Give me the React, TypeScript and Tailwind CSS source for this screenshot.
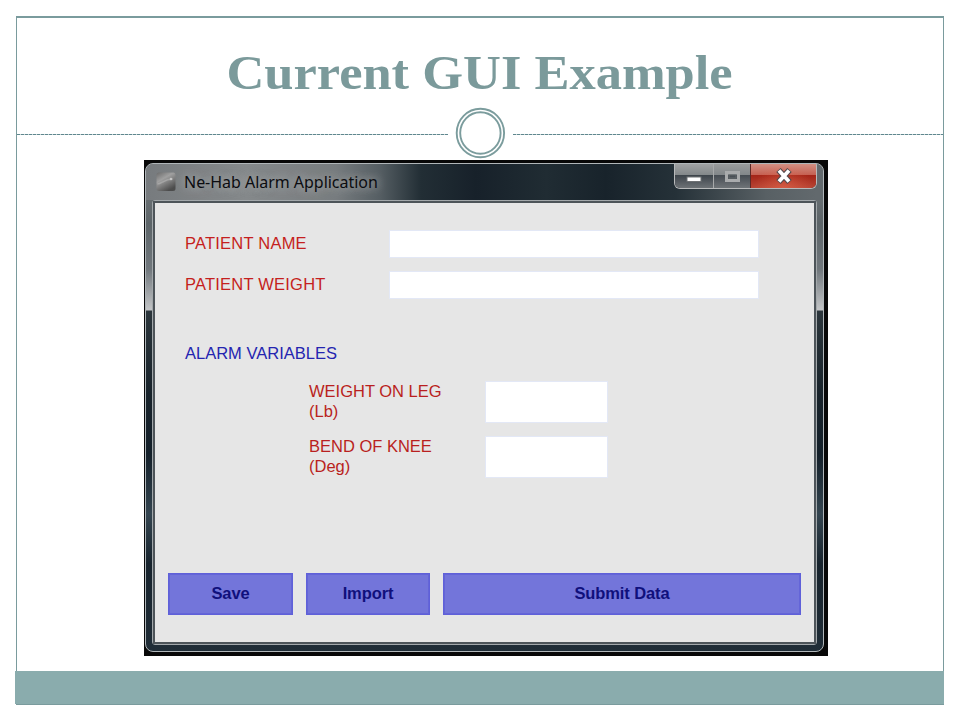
import React from "react";

const labelText = "font-['Liberation_Sans',Arial,sans-serif] text-[16.5px] leading-[19.5px]";

function Divider() {
  return (
    <div className="flex h-px w-full justify-between">
      <div className="h-px w-[431px] bg-[repeating-linear-gradient(90deg,#5f878e_0_3px,#c3d3d5_3px_4px)]" />
      <div className="h-px w-[430px] bg-[repeating-linear-gradient(90deg,#5f878e_0_3px,#c3d3d5_3px_4px)]" />
    </div>
  );
}

function Ring() {
  return (
    <svg className="absolute left-[455px] top-[107px]" width="51" height="52" viewBox="0 0 51 52" fill="none" stroke="#7b9c9d">
      <ellipse cx="25.4" cy="26" rx="23.7" ry="24.2" strokeWidth="1.9" />
      <ellipse cx="25.4" cy="26" rx="20.2" ry="20.8" strokeWidth="1.9" />
    </svg>
  );
}

function Caption() {
  return (
    <div className="flex h-[36px] w-full justify-between bg-[linear-gradient(90deg,#777b7e_0,#85898b_100px,#777c7f_190px,#545d62_235px,#222e35_275px,#17212a_330px,#202c33_400px,#18232b_460px,#253138_530px,#586064_620px,#62696d_670px)]">
      <div className="flex items-center">
        <svg className="ml-[10px]" width="20" height="20" viewBox="0 0 20 20">
          <defs>
            <linearGradient id="appIcon" x1="0" y1="0" x2="0.6" y2="1">
              <stop offset="0" stopColor="#6b6b6b" />
              <stop offset=".4" stopColor="#a0a0a0" />
              <stop offset="1" stopColor="#4c4c4c" />
            </linearGradient>
          </defs>
          <rect x="0.5" y="0.5" width="19" height="18.5" rx="2.5" fill="url(#appIcon)" />
          <path d="M1.5 12c4 0 7-5 15-5" stroke="#b4b4b4" strokeWidth="1.5" fill="none" opacity=".6" />
          <circle cx="15" cy="7" r="1.3" fill="#c5c5c5" />
        </svg>
        <span className="ml-[8px] whitespace-nowrap font-['Noto_Sans',sans-serif] text-[16px] leading-[20px] tracking-[-0.03px] text-[#0b0c10] [text-shadow:0_0_8px_#a5a8aa,0_0_12px_#a0a3a5]">
          Ne-Hab Alarm Application
        </span>
      </div>
      <div className="mr-[6px] flex h-[25px] rounded-b-[6px] border border-t-0 border-[#b8babb] bg-[#30343a]">
        <div className="flex w-[39px] items-center justify-center rounded-bl-[5px] border-r border-[#a7a9aa] bg-[linear-gradient(#a0a2a3_0,#83888a_45%,#3c434a_46%,#6d7276_100%)]">
          <svg width="16" height="7" viewBox="0 0 16 7" className="mt-[6px]">
            <rect x="1" y="1" width="14" height="4.5" fill="#fff" stroke="#6d7073" />
          </svg>
        </div>
        <div className="flex w-[37px] items-center justify-center border-r border-[#5d2926] bg-[linear-gradient(#999b9c_0,#82878a_45%,#454b52_46%,#6f7478_100%)]">
          <svg width="17" height="13" viewBox="0 0 17 13" fill="none">
            <rect x="2.5" y="2.5" width="12" height="8" stroke="#a9abad" strokeWidth="3" />
            <rect x="5" y="5" width="7" height="3" stroke="#60666b" />
          </svg>
        </div>
        <div className="flex w-[65px] items-center justify-center rounded-br-[5px] bg-[radial-gradient(ellipse_at_50%_100%,rgba(235,110,80,.55),transparent_65%),linear-gradient(#d29083_0,#c56052_45%,#a32417_46%,#b84535_100%)]">
          <svg width="18" height="16" viewBox="0 0 18 16" fill="none">
            <path d="M3.5 2 14.5 14M14.5 2 3.5 14" stroke="#54494c" strokeWidth="6" />
            <path d="M4 2.5 14 13.5M14 2.5 4 13.5" stroke="#fff" strokeWidth="3.8" />
          </svg>
        </div>
      </div>
    </div>
  );
}

function WideField({ label }: { label: string }) {
  return (
    <div className="flex h-[26px] items-center">
      <label className={`w-[205px] tracking-[0.22px] text-[#c51f20] ${labelText}`}>{label}</label>
      <input className="h-[26px] w-[368px] bg-white outline outline-[#e3e8f6]" />
    </div>
  );
}

function SmallField({ label, unit }: { label: string; unit: string }) {
  return (
    <div className="flex h-[40px]">
      <label className={`w-[177px] text-[#b91f20] ${labelText}`}>
        {label}
        <br />
        {unit}
      </label>
      <input className="h-[40px] w-[121px] bg-white outline outline-[#e3e8f6]" />
    </div>
  );
}

function Action({ text, width }: { text: string; width: string }) {
  return (
    <button
      className={`h-[42px] border border-[#5f60d9] bg-[#7375da] pb-px font-['Liberation_Sans',Arial,sans-serif] text-[16.5px] font-bold tracking-[-0.1px] text-[#10107c] shadow-[inset_0_0_0_1px_#6465d8] ${width}`}
    >
      {text}
    </button>
  );
}

function AppWindow() {
  return (
    <div className="h-[496px] w-[684px] bg-[#080808] pl-px pt-[3px]">
      <div className="flex h-[489px] w-[679px] flex-col overflow-hidden rounded-[8px] border border-[#b0b6b9] bg-[linear-gradient(#777b7e_0,#5c6468_60px,#70777c_105px,#c3c5c7_146px,#2c363c_147px,#18232b_230px,#14202a_290px,#344550_350px,#17232d_400px,#202d37_489px)]">
        <Caption />
        <div className="mx-[6px] h-[445px] rounded-[3px] border border-[#a3a8ab]">
          <div className="flex h-full flex-col border-2 border-[#4d5459] bg-[#e6e6e6]">
            <div className="flex flex-col gap-[15px] pl-[30px] pt-[28px]">
              <WideField label="PATIENT NAME" />
              <WideField label="PATIENT WEIGHT" />
            </div>
            <div className={`ml-[30px] mt-[46px] text-[#2424b0] ${labelText}`}>ALARM VARIABLES</div>
            <div className="ml-[154px] mt-[18.5px] flex flex-col gap-[15px]">
              <SmallField label="WEIGHT ON LEG" unit="(Lb)" />
              <SmallField label="BEND OF KNEE" unit="(Deg)" />
            </div>
            <div className="ml-[13px] mt-[96px] flex gap-[13px]">
              <Action text="Save" width="w-[125px]" />
              <Action text="Import" width="w-[124px]" />
              <Action text="Submit Data" width="w-[358px]" />
            </div>
          </div>
        </div>
      </div>
    </div>
  );
}

export default function App() {
  return (
    <div className="relative h-[720px] w-[960px] overflow-hidden bg-white px-[16px] pt-[16px]">
      <div className="flex h-[689px] w-[928px] flex-col border border-t-2 border-[#7a9b9d]">
        <h1 className="flex h-[116px] items-center justify-center pb-[6px] whitespace-nowrap font-['Liberation_Serif',Georgia,serif] text-[48px] font-bold text-[#7b9a9b]">
          <span className="inline-block scale-x-[1.093]">Current GUI Example</span>
        </h1>
        <Divider />
        <div className="ml-[127px] mt-[25px]">
          <AppWindow />
        </div>
        <div className="-ml-[2px] -mr-px mt-[15px] flex-1 bg-[#8aacad]" />
      </div>
      <Ring />
    </div>
  );
}
